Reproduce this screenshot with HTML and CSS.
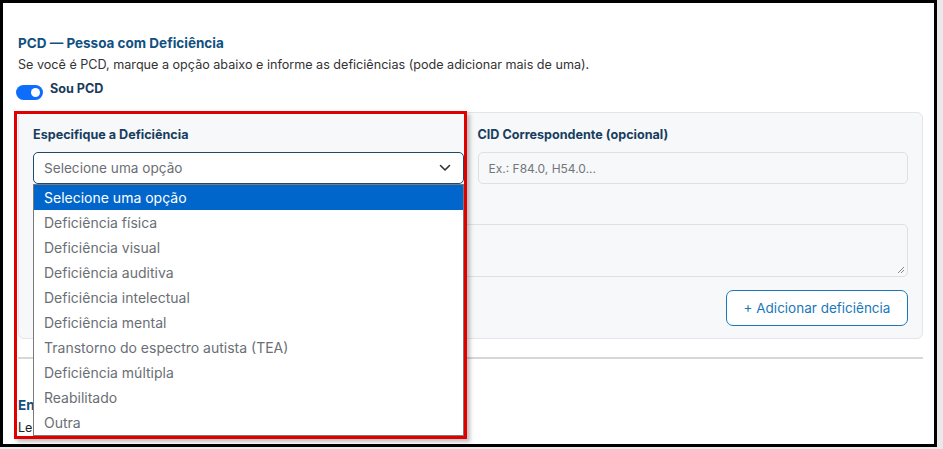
FILE: index.html
```html
<!DOCTYPE html>
<html lang="pt-BR">
<head>
<meta charset="utf-8">
<title>PCD</title>
<link rel="stylesheet" href="styles.css">
</head>
<body>
<div class="frame">
  <section class="section">
    <h2 class="title">PCD — Pessoa com Deficiência</h2>
    <p class="desc">Se você é PCD, marque a opção abaixo e informe as deficiências (pode adicionar mais de uma).</p>
    <label class="switch-row">
      <span class="switch"><span class="knob"></span></span>
      <span class="switch-label">Sou PCD</span>
    </label>

    <div class="card">
      <div class="row">
        <div class="field">
          <div class="label">Especifique a Deficiência</div>
          <div class="select">
            <span>Selecione uma opção</span>
            <svg class="chev" width="12" height="8" viewBox="0 0 12 8"><path d="M1.5 1.5 L6 6 L10.5 1.5" fill="none" stroke="#333" stroke-width="1.6" stroke-linecap="round" stroke-linejoin="round"/></svg>
          </div>
          <ul class="dropdown">
            <li class="active">Selecione uma opção</li>
            <li>Deficiência física</li>
            <li>Deficiência visual</li>
            <li>Deficiência auditiva</li>
            <li>Deficiência intelectual</li>
            <li>Deficiência mental</li>
            <li>Transtorno do espectro autista (TEA)</li>
            <li>Deficiência múltipla</li>
            <li>Reabilitado</li>
            <li>Outra</li>
          </ul>
        </div>
        <div class="field">
          <div class="label">CID Correspondente (opcional)</div>
          <div class="input">Ex.: F84.0, H54.0...</div>
        </div>
      </div>
      <div class="label obs">Observações (opcional)</div>
      <div class="textarea">
        <svg class="grip" width="8" height="8" viewBox="0 0 8 8"><path d="M7 1 L1 7 M7 4 L4 7" stroke="#888" stroke-width="1"/></svg>
      </div>
      <div class="actions">
        <button class="btn">+ Adicionar deficiência</button>
      </div>
    </div>
  </section>
  <hr class="sep">
  <section class="section next">
    <h2 class="title">Endereço</h2>
    <p class="desc dark">Lembre-se de manter o endereço atualizado.</p>
  </section>
  <div class="highlight"></div>
</div>
</body>
</html>
```
FILE: styles.css
```css
* { box-sizing: border-box; }
html, body { margin: 0; padding: 0; }
body {
  background: #e9e9e9;
  font-family: Inter, "Noto Sans", sans-serif;
  width: 943px;
  height: 449px;
  overflow: hidden;
}
.frame {
  position: relative;
  width: 937px;
  height: 447px;
  border: 3px solid #000;
  background: #fff;
  overflow: hidden;
  padding: 0 11px 0 15px;
}
.section { padding-top: 30px; }
.title {
  margin: 0;
  font-size: 13.5px;
  line-height: 20px;
  font-weight: 700;
  color: #11507f;
}
.desc {
  margin: 3px 0 0;
  font-size: 12.6px;
  line-height: 18px;
  color: #333;
}
.desc.dark { margin-top: 4px; color: #222; }
.switch-row {
  display: flex;
  align-items: center;
  gap: 7px;
  margin-top: 3px;
  height: 24px;
  position: relative;
  left: -2px;
}
.switch {
  width: 27px;
  height: 15px;
  border-radius: 8px;
  background: #0d6efd;
  position: relative;
  margin-top: 7px;
}
.knob {
  position: absolute;
  right: 3px;
  top: 3px;
  width: 9px;
  height: 9px;
  border-radius: 50%;
  background: #fff;
}
.switch-label {
  font-size: 12.6px;
  font-weight: 700;
  color: #1a3b5a;
  margin-top: -1px;
}
.card {
  margin-top: 11px;
  background: #f7f8fa;
  border: 1px solid #e2e5ea;
  border-radius: 6px;
  padding: 13px 14px 13px 14px;
  height: 227px;
}
.row {
  display: grid;
  grid-template-columns: 1fr 1fr;
  gap: 14px;
}
.field { position: relative; }
.label {
  font-size: 12.6px;
  font-weight: 700;
  color: #173e5f;
  line-height: 18px;
  margin-bottom: 8px;
}
.select, .input {
  height: 32px;
  border-radius: 5px;
  display: flex;
  align-items: center;
  padding: 0 10px;
}
.select {
  background: #fff;
  border: 1px solid #1f4a6b;
  justify-content: space-between;
  font-size: 13.6px;
  color: #6a6f75;
}
.chev { margin-right: 2px; }
.input {
  background: #f7f8fa;
  border: 1px solid #dde1e6;
  font-size: 12px;
  color: #72777c;
}
.obs { margin: 13px 0 9px; }
.textarea {
  height: 53px;
  border: 1px solid #dde1e6;
  border-radius: 5px;
  background: #f7f8fa;
  position: relative;
}
.grip { position: absolute; right: 2px; bottom: 2px; }
.actions {
  display: flex;
  justify-content: flex-end;
  margin-top: 13px;
}
.btn {
  font-family: Inter, "Noto Sans", sans-serif;
  height: 36px;
  width: 182px;
  border: 1px solid #1a78b8;
  border-radius: 7px;
  background: #fff;
  color: #1a78b8;
  font-size: 13.5px;
  padding: 0;
}
.sep {
  margin: 18px 0 0;
  border: 0;
  height: 2px;
  background: #d7d7d7;
}
.next { padding-top: 36px; }
.dropdown {
  position: absolute;
  left: 0;
  right: 0;
  top: 58px;
  margin: 0;
  padding: 0;
  list-style: none;
  background: #fff;
  border: 1px solid #7a7a7a;
  z-index: 5;
}
.dropdown li {
  height: 25px;
  line-height: 25px;
  padding-left: 10px;
  font-size: 14px;
  color: #6a6f75;
  white-space: nowrap;
}
.dropdown li.active {
  background: #0066cc;
  color: #fff;
}
.highlight {
  position: absolute;
  left: 11px;
  top: 108px;
  width: 453px;
  height: 328px;
  border: 3px solid #e10000;
  box-shadow: 3px 3px 4px rgba(0,0,0,0.25);
  z-index: 6;
  pointer-events: none;
}
```
